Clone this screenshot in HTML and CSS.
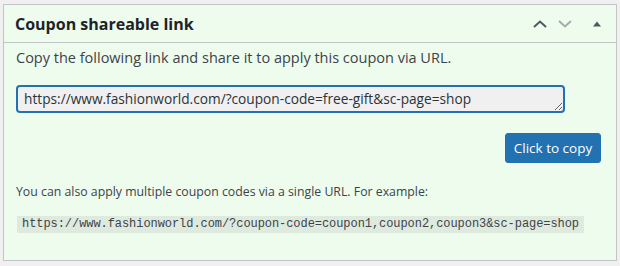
FILE: index.html
```html
<!DOCTYPE html>
<html>
<head>
<meta charset="utf-8">
<link rel="stylesheet" href="styles.css">
</head>
<body>
<div class="panel">
  <div class="panel-header">
    <h2 class="panel-title">Coupon shareable link</h2>
    <div class="panel-actions">
      <span class="act act-up"><svg width="14" height="8" viewBox="0 0 14 8"><path d="M1 7 L7 1.5 L13 7" fill="none" stroke="#50575e" stroke-width="2"/></svg></span>
      <span class="act act-down"><svg width="14" height="8" viewBox="0 0 14 8"><path d="M1 1 L7 6.5 L13 1" fill="none" stroke="#a7aaad" stroke-width="2"/></svg></span>
      <span class="act act-toggle"><svg width="8" height="6" viewBox="0 0 8 6"><path d="M0 5.5 L4 0.5 L8 5.5 Z" fill="#50575e"/></svg></span>
    </div>
  </div>
  <div class="inside">
    <p class="lead">Copy the following link and share it to apply this coupon via URL.</p>
    <textarea class="link-field" readonly rows="1">https://www.fashionworld.com/?coupon-code=free-gift&amp;sc-page=shop</textarea>
    <div class="btn-row"><button class="btn">Click to copy</button></div>
    <p class="note">You can also apply multiple coupon codes via a single URL. For example:</p>
    <code class="example">https://www.fashionworld.com/?coupon-code=coupon1,coupon2,coupon3&amp;sc-page=shop</code>
  </div>
</div>
</body>
</html>
```

FILE: styles.css
```css
html, body {
  margin: 0;
  padding: 0;
  background: #f0f0f1;
}
body {
  padding: 4px 3px 0 3px;
  font-family: "Open Sans", "Noto Sans", sans-serif;
  color: #3c434a;
  font-size: 13px;
}
.panel {
  width: 614px;
  box-sizing: border-box;
  background: #eefcee;
  border: 1px solid #c3c4c7;
  box-shadow: 0 1px 1px rgba(0,0,0,0.04);
}
.panel-header {
  display: flex;
  align-items: center;
  justify-content: space-between;
  height: 37px;
  border-bottom: 1px solid #c3c4c7;
}
.panel-title {
  margin: 0 0 0 11px;
  font-size: 16px;
  font-weight: 700;
  color: #1d2327;
}
.panel-actions {
  display: flex;
  align-items: center;
  margin-right: 15px;
}
.act {
  display: flex;
  align-items: center;
  justify-content: center;
}
.act-up { margin-right: 11px; }
.act-down { margin-right: 21px; }
.inside {
  display: flex;
  flex-direction: column;
  align-items: flex-start;
  padding: 5px 15px 27px 12px;
}
.lead {
  margin: 0;
  font-size: 14.5px;
  line-height: 20px;
}
.link-field {
  margin-top: 17px;
  width: 549px;
  height: 28px;
  box-sizing: border-box;
  border: 2px solid #2271b1;
  border-radius: 4px;
  background: #f0f0f0;
  font-family: "Open Sans", "Noto Sans", sans-serif;
  font-size: 13.7px;
  color: #2c3338;
  padding: 2px 6px;
  line-height: 20px;
  overflow: hidden;
  outline: none;
}
.btn-row {
  align-self: stretch;
  display: flex;
  justify-content: flex-end;
  margin-top: 20px;
}
.btn {
  height: 30px;
  width: 96px;
  background: #2271b1;
  border: 1px solid #2271b1;
  border-radius: 3px;
  color: #fff;
  font-family: "Open Sans", "Noto Sans", sans-serif;
  font-size: 13.5px;
  padding: 0;
}
.note {
  margin: 19px 0 0 0;
  font-size: 12.3px;
  line-height: 20px;
}
.example {
  margin-top: 14px;
  margin-left: 1px;
  background: #dfeadf;
  font-family: "Liberation Mono", monospace;
  font-size: 12px;
  letter-spacing: -0.06px;
  line-height: 17px;
  padding: 0 5px 0 5px;
  color: #3c434a;
}
```
